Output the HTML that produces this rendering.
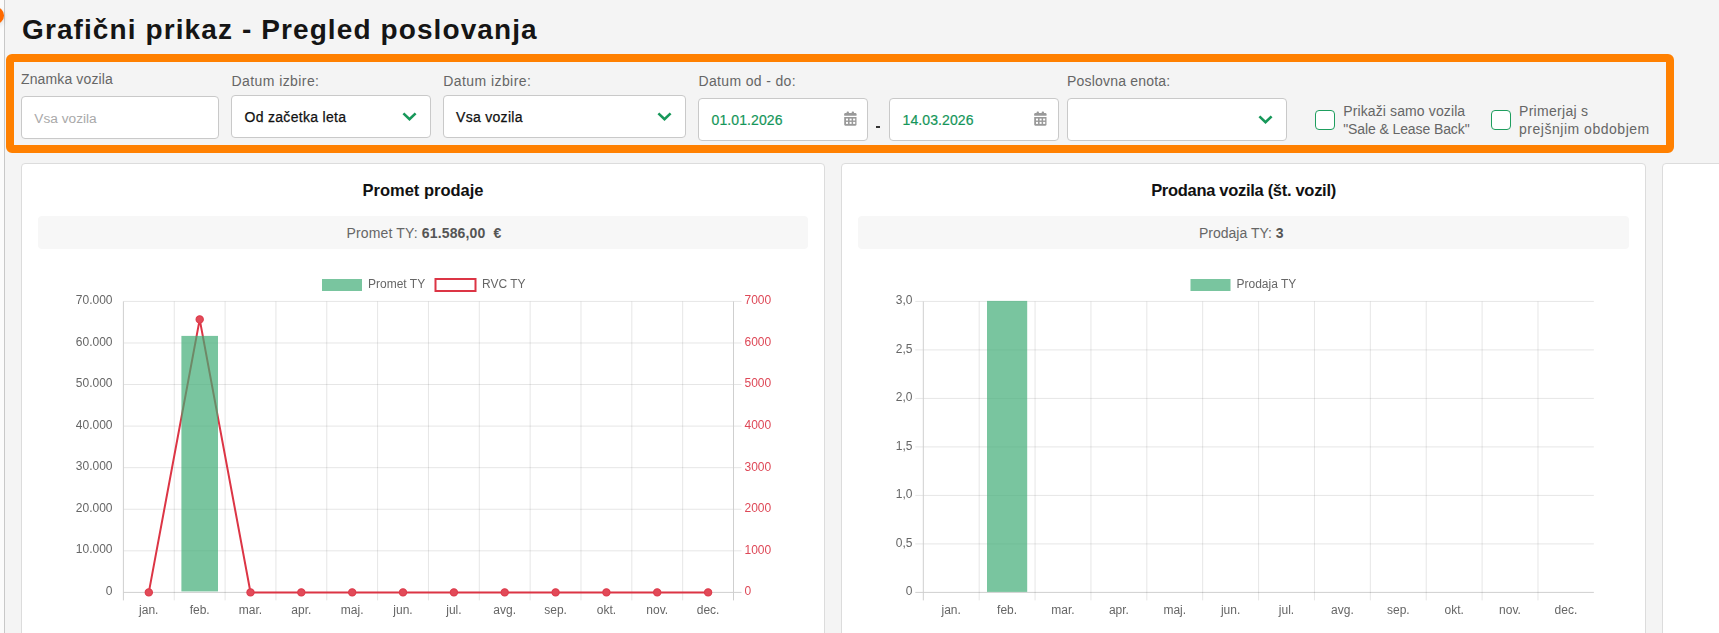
<!DOCTYPE html><html><head><meta charset="utf-8"><title>Grafični prikaz</title><style>
*{margin:0;padding:0;box-sizing:border-box}
html,body{width:1719px;height:633px;overflow:hidden;background:#f4f4f4;font-family:"Liberation Sans", sans-serif}
.t{position:absolute;white-space:pre}
.abs{position:absolute}
.inp{position:absolute;background:#fff;border:1px solid #c9c9c9;border-radius:4px}
.card{position:absolute;background:#fff;border:1px solid #dcdcdc;border-radius:4px}
.sum{position:absolute;background:#f7f7f7;border-radius:4px}
</style></head><body>
<div class="abs" style="left:0;top:0;width:4px;height:633px;background:#fbfbfb"></div>
<div class="abs" style="left:4px;top:0;width:1px;height:633px;background:#c8c8c8"></div>
<div class="abs" style="left:-13.2px;top:7.3px;width:17px;height:16.6px;border-radius:50%;background:#ff6a00;box-shadow:0 2px 5px rgba(0,0,0,0.12)"></div>
<div class="t" style="left:22px;top:15.90px;font-size:28px;line-height:28px;color:#151515;font-weight:bold;letter-spacing:1.1px;">Grafični prikaz - Pregled poslovanja</div>
<div class="abs" style="left:6px;top:54.4px;width:1668px;height:99px;border:8px solid #ff8000;border-radius:6px"></div>
<div class="t" style="left:21px;top:72.15px;font-size:14px;line-height:14px;color:#666;font-weight:normal;letter-spacing:0.13px;">Znamka vozila</div>
<div class="t" style="left:231.5px;top:74.15px;font-size:14px;line-height:14px;color:#666;font-weight:normal;letter-spacing:0.42px;">Datum izbire:</div>
<div class="t" style="left:443.3px;top:74.15px;font-size:14px;line-height:14px;color:#666;font-weight:normal;letter-spacing:0.42px;">Datum izbire:</div>
<div class="t" style="left:698.5px;top:74.15px;font-size:14px;line-height:14px;color:#666;font-weight:normal;letter-spacing:0.35px;">Datum od - do:</div>
<div class="t" style="left:1067px;top:73.95px;font-size:14px;line-height:14px;color:#666;font-weight:normal;letter-spacing:0.2px;">Poslovna enota:</div>
<div class="inp" style="left:21px;top:96px;width:198px;height:43px"></div>
<div class="t" style="left:34.3px;top:111.60px;font-size:13.7px;line-height:13.7px;color:#a9a9a9;font-weight:normal;letter-spacing:0px;">Vsa vozila</div>
<div class="inp" style="left:231px;top:95px;width:200px;height:43px"></div>
<div class="t" style="left:244.5px;top:109.75px;font-size:14px;line-height:14px;color:#111;font-weight:normal;letter-spacing:0.3px;-webkit-text-stroke:0.25px #111">Od začetka leta</div>
<div class="inp" style="left:443px;top:95px;width:243px;height:43px"></div>
<div class="t" style="left:456px;top:109.75px;font-size:14px;line-height:14px;color:#111;font-weight:normal;letter-spacing:0.3px;-webkit-text-stroke:0.25px #111">Vsa vozila</div>
<div class="inp" style="left:698px;top:98px;width:170px;height:43px"></div>
<div class="t" style="left:711.5px;top:112.95px;font-size:14px;line-height:14px;color:#15965a;font-weight:normal;letter-spacing:0.1px;-webkit-text-stroke:0.2px #15965a">01.01.2026</div>
<div class="inp" style="left:889px;top:98px;width:170px;height:43px"></div>
<div class="t" style="left:902.5px;top:112.95px;font-size:14px;line-height:14px;color:#15965a;font-weight:normal;letter-spacing:0.1px;-webkit-text-stroke:0.2px #15965a">14.03.2026</div>
<div class="inp" style="left:1067px;top:98px;width:220px;height:43px"></div>
<div class="abs" style="left:876px;top:126px;width:4px;height:2px;background:#333"></div>
<svg class="abs" style="left:402px;top:112px" width="15" height="10" viewBox="0 0 15 10"><path d="M1.4 1.4 L7.5 7.3 L13.6 1.4" fill="none" stroke="#17985a" stroke-width="2.6"/></svg>
<svg class="abs" style="left:657px;top:112px" width="15" height="10" viewBox="0 0 15 10"><path d="M1.4 1.4 L7.5 7.3 L13.6 1.4" fill="none" stroke="#17985a" stroke-width="2.6"/></svg>
<svg class="abs" style="left:1258px;top:115px" width="15" height="10" viewBox="0 0 15 10"><path d="M1.4 1.4 L7.5 7.3 L13.6 1.4" fill="none" stroke="#17985a" stroke-width="2.6"/></svg>
<svg class="abs" style="left:843.5px;top:111px" width="14" height="16" viewBox="0 0 14 16">
<g fill="#999"><rect x="2.6" y="0.4" width="2.3" height="2.2" rx="0.8"/><rect x="7.7" y="0.4" width="2.3" height="2.2" rx="0.8"/>
<path d="M0.2 3.2 Q0.2 2 1.4 2 L11.3 2 Q12.5 2 12.5 3.2 L12.5 4.8 L0.2 4.8 Z"/>
<path d="M0.2 5.9 L12.5 5.9 L12.5 13.6 Q12.5 14.7 11.4 14.7 L1.3 14.7 Q0.2 14.7 0.2 13.6 Z"/></g>
<g fill="#fff"><rect x="2" y="7.6" width="2" height="1.9"/><rect x="5.6" y="7.6" width="2" height="1.9"/><rect x="9.1" y="7.6" width="2.1" height="1.9"/>
<rect x="2" y="10.9" width="2" height="2"/><rect x="5.6" y="10.9" width="2" height="2"/><rect x="9.1" y="10.9" width="2.1" height="2"/></g></svg>
<svg class="abs" style="left:1034px;top:111px" width="14" height="16" viewBox="0 0 14 16">
<g fill="#999"><rect x="2.6" y="0.4" width="2.3" height="2.2" rx="0.8"/><rect x="7.7" y="0.4" width="2.3" height="2.2" rx="0.8"/>
<path d="M0.2 3.2 Q0.2 2 1.4 2 L11.3 2 Q12.5 2 12.5 3.2 L12.5 4.8 L0.2 4.8 Z"/>
<path d="M0.2 5.9 L12.5 5.9 L12.5 13.6 Q12.5 14.7 11.4 14.7 L1.3 14.7 Q0.2 14.7 0.2 13.6 Z"/></g>
<g fill="#fff"><rect x="2" y="7.6" width="2" height="1.9"/><rect x="5.6" y="7.6" width="2" height="1.9"/><rect x="9.1" y="7.6" width="2.1" height="1.9"/>
<rect x="2" y="10.9" width="2" height="2"/><rect x="5.6" y="10.9" width="2" height="2"/><rect x="9.1" y="10.9" width="2.1" height="2"/></g></svg>
<div class="abs" style="left:1315px;top:110px;width:20px;height:20px;border:1.5px solid #1e9e5e;border-radius:4px;background:#fff"></div>
<div class="t" style="left:1343.2px;top:103.85px;font-size:14px;line-height:14px;color:#666;font-weight:normal;letter-spacing:0.12px;">Prikaži samo vozila</div>
<div class="t" style="left:1343.2px;top:121.65px;font-size:14px;line-height:14px;color:#666;font-weight:normal;letter-spacing:-0.1px;">"Sale &amp; Lease Back"</div>
<div class="abs" style="left:1491px;top:110px;width:20px;height:20px;border:1.5px solid #1e9e5e;border-radius:4px;background:#fff"></div>
<div class="t" style="left:1519px;top:103.85px;font-size:14px;line-height:14px;color:#666;font-weight:normal;letter-spacing:0.3px;">Primerjaj s</div>
<div class="t" style="left:1519px;top:121.65px;font-size:14px;line-height:14px;color:#666;font-weight:normal;letter-spacing:0.52px;">prejšnjim obdobjem</div>
<div class="card" style="left:21px;top:163px;width:804px;height:500px"></div>
<div class="card" style="left:841px;top:163px;width:805px;height:500px"></div>
<div class="card" style="left:1662px;top:163px;width:100px;height:500px"></div>
<div class="t" style="left:21px;top:182.23px;font-size:16.5px;line-height:16.5px;color:#111;font-weight:bold;letter-spacing:0px;width:804px;text-align:center">Promet prodaje</div>
<div class="sum" style="left:38px;top:216px;width:770px;height:32.5px"></div>
<div class="t" style="left:346.5px;top:226.05px;font-size:14px;line-height:14px;color:#666;font-weight:normal;letter-spacing:0.15px;">Promet TY: <b style="color:#555">61.586,00  €</b></div>
<div class="t" style="left:841px;top:182.23px;font-size:16.5px;line-height:16.5px;color:#111;font-weight:bold;letter-spacing:-0.3px;width:805px;text-align:center">Prodana vozila (št. vozil)</div>
<div class="sum" style="left:858px;top:216px;width:771px;height:32.5px"></div>
<div class="t" style="left:1199px;top:226.05px;font-size:14px;line-height:14px;color:#666;font-weight:normal;letter-spacing:0px;">Prodaja TY: <b style="color:#555">3</b></div>
<svg class="abs" style="left:0;top:0;will-change:transform" width="1719" height="633" viewBox="0 0 1719 633" font-family="Liberation Sans, sans-serif"><line x1="123.4" y1="592.4" x2="741.5" y2="592.4" stroke="#cfcfcf" stroke-width="1"/><text x="112.5" y="595.0" text-anchor="end" fill="#666" font-size="12">0</text><text x="744.5" y="595.3" fill="#de4857" font-size="12">0</text><line x1="123.4" y1="550.8285714285714" x2="741.5" y2="550.8285714285714" stroke="rgba(0,0,0,0.1)" stroke-width="1"/><text x="112.5" y="553.4" text-anchor="end" fill="#666" font-size="12">10.000</text><text x="744.5" y="553.7" fill="#de4857" font-size="12">1000</text><line x1="123.4" y1="509.25714285714287" x2="741.5" y2="509.25714285714287" stroke="rgba(0,0,0,0.1)" stroke-width="1"/><text x="112.5" y="511.9" text-anchor="end" fill="#666" font-size="12">20.000</text><text x="744.5" y="512.2" fill="#de4857" font-size="12">2000</text><line x1="123.4" y1="467.68571428571425" x2="741.5" y2="467.68571428571425" stroke="rgba(0,0,0,0.1)" stroke-width="1"/><text x="112.5" y="470.3" text-anchor="end" fill="#666" font-size="12">30.000</text><text x="744.5" y="470.6" fill="#de4857" font-size="12">3000</text><line x1="123.4" y1="426.1142857142857" x2="741.5" y2="426.1142857142857" stroke="rgba(0,0,0,0.1)" stroke-width="1"/><text x="112.5" y="428.7" text-anchor="end" fill="#666" font-size="12">40.000</text><text x="744.5" y="429.0" fill="#de4857" font-size="12">4000</text><line x1="123.4" y1="384.5428571428571" x2="741.5" y2="384.5428571428571" stroke="rgba(0,0,0,0.1)" stroke-width="1"/><text x="112.5" y="387.1" text-anchor="end" fill="#666" font-size="12">50.000</text><text x="744.5" y="387.4" fill="#de4857" font-size="12">5000</text><line x1="123.4" y1="342.97142857142853" x2="741.5" y2="342.97142857142853" stroke="rgba(0,0,0,0.1)" stroke-width="1"/><text x="112.5" y="345.6" text-anchor="end" fill="#666" font-size="12">60.000</text><text x="744.5" y="345.9" fill="#de4857" font-size="12">6000</text><line x1="123.4" y1="301.4" x2="741.5" y2="301.4" stroke="rgba(0,0,0,0.1)" stroke-width="1"/><text x="112.5" y="304.0" text-anchor="end" fill="#666" font-size="12">70.000</text><text x="744.5" y="304.3" fill="#de4857" font-size="12">7000</text><line x1="123.4" y1="301.4" x2="123.4" y2="600.4" stroke="#cfcfcf" stroke-width="1"/><line x1="174.24166666666667" y1="301.4" x2="174.24166666666667" y2="600.4" stroke="rgba(0,0,0,0.1)" stroke-width="1"/><line x1="225.08333333333334" y1="301.4" x2="225.08333333333334" y2="600.4" stroke="rgba(0,0,0,0.1)" stroke-width="1"/><line x1="275.925" y1="301.4" x2="275.925" y2="600.4" stroke="rgba(0,0,0,0.1)" stroke-width="1"/><line x1="326.76666666666665" y1="301.4" x2="326.76666666666665" y2="600.4" stroke="rgba(0,0,0,0.1)" stroke-width="1"/><line x1="377.60833333333335" y1="301.4" x2="377.60833333333335" y2="600.4" stroke="rgba(0,0,0,0.1)" stroke-width="1"/><line x1="428.45000000000005" y1="301.4" x2="428.45000000000005" y2="600.4" stroke="rgba(0,0,0,0.1)" stroke-width="1"/><line x1="479.29166666666663" y1="301.4" x2="479.29166666666663" y2="600.4" stroke="rgba(0,0,0,0.1)" stroke-width="1"/><line x1="530.1333333333333" y1="301.4" x2="530.1333333333333" y2="600.4" stroke="rgba(0,0,0,0.1)" stroke-width="1"/><line x1="580.975" y1="301.4" x2="580.975" y2="600.4" stroke="rgba(0,0,0,0.1)" stroke-width="1"/><line x1="631.8166666666667" y1="301.4" x2="631.8166666666667" y2="600.4" stroke="rgba(0,0,0,0.1)" stroke-width="1"/><line x1="682.6583333333333" y1="301.4" x2="682.6583333333333" y2="600.4" stroke="rgba(0,0,0,0.1)" stroke-width="1"/><line x1="733.5" y1="301.4" x2="733.5" y2="600.4" stroke="#cfcfcf" stroke-width="1"/><text x="148.8" y="613.8" text-anchor="middle" fill="#666" font-size="12">jan.</text><text x="199.7" y="613.8" text-anchor="middle" fill="#666" font-size="12">feb.</text><text x="250.5" y="613.8" text-anchor="middle" fill="#666" font-size="12">mar.</text><text x="301.3" y="613.8" text-anchor="middle" fill="#666" font-size="12">apr.</text><text x="352.2" y="613.8" text-anchor="middle" fill="#666" font-size="12">maj.</text><text x="403.0" y="613.8" text-anchor="middle" fill="#666" font-size="12">jun.</text><text x="453.9" y="613.8" text-anchor="middle" fill="#666" font-size="12">jul.</text><text x="504.7" y="613.8" text-anchor="middle" fill="#666" font-size="12">avg.</text><text x="555.6" y="613.8" text-anchor="middle" fill="#666" font-size="12">sep.</text><text x="606.4" y="613.8" text-anchor="middle" fill="#666" font-size="12">okt.</text><text x="657.2" y="613.8" text-anchor="middle" fill="#666" font-size="12">nov.</text><text x="708.1" y="613.8" text-anchor="middle" fill="#666" font-size="12">dec.</text><polyline points="148.8,592.4 199.7,319.4 250.5,592.4 301.3,592.4 352.2,592.4 403.0,592.4 453.9,592.4 504.7,592.4 555.6,592.4 606.4,592.4 657.2,592.4 708.1,592.4" fill="none" stroke="#dc3545" stroke-width="2" stroke-linejoin="miter"/><circle cx="148.8" cy="592.4" r="3.6" fill="#e24a58" stroke="#de3e4e" stroke-width="1.2"/><circle cx="199.7" cy="319.4" r="3.6" fill="#e24a58" stroke="#de3e4e" stroke-width="1.2"/><circle cx="250.5" cy="592.4" r="3.6" fill="#e24a58" stroke="#de3e4e" stroke-width="1.2"/><circle cx="301.3" cy="592.4" r="3.6" fill="#e24a58" stroke="#de3e4e" stroke-width="1.2"/><circle cx="352.2" cy="592.4" r="3.6" fill="#e24a58" stroke="#de3e4e" stroke-width="1.2"/><circle cx="403.0" cy="592.4" r="3.6" fill="#e24a58" stroke="#de3e4e" stroke-width="1.2"/><circle cx="453.9" cy="592.4" r="3.6" fill="#e24a58" stroke="#de3e4e" stroke-width="1.2"/><circle cx="504.7" cy="592.4" r="3.6" fill="#e24a58" stroke="#de3e4e" stroke-width="1.2"/><circle cx="555.6" cy="592.4" r="3.6" fill="#e24a58" stroke="#de3e4e" stroke-width="1.2"/><circle cx="606.4" cy="592.4" r="3.6" fill="#e24a58" stroke="#de3e4e" stroke-width="1.2"/><circle cx="657.2" cy="592.4" r="3.6" fill="#e24a58" stroke="#de3e4e" stroke-width="1.2"/><circle cx="708.1" cy="592.4" r="3.6" fill="#e24a58" stroke="#de3e4e" stroke-width="1.2"/><rect x="181.4" y="335.9" width="36.6" height="255.5" fill="rgba(64,172,118,0.7)"/><rect x="322" y="279" width="40" height="12" fill="rgba(64,172,118,0.7)"/><text x="368" y="288" fill="#666" font-size="12">Promet TY</text><rect x="435.5" y="279" width="40" height="12" fill="#fff" stroke="#dc3545" stroke-width="2"/><text x="482" y="288" fill="#666" font-size="12">RVC TY</text><line x1="915.3" y1="592.4" x2="1593.8600000000001" y2="592.4" stroke="#cfcfcf" stroke-width="1"/><text x="912.5" y="595.0" text-anchor="end" fill="#666" font-size="12">0</text><line x1="915.3" y1="543.9" x2="1593.8600000000001" y2="543.9" stroke="rgba(0,0,0,0.1)" stroke-width="1"/><text x="912.5" y="546.5" text-anchor="end" fill="#666" font-size="12">0,5</text><line x1="915.3" y1="495.4" x2="1593.8600000000001" y2="495.4" stroke="rgba(0,0,0,0.1)" stroke-width="1"/><text x="912.5" y="498.0" text-anchor="end" fill="#666" font-size="12">1,0</text><line x1="915.3" y1="446.9" x2="1593.8600000000001" y2="446.9" stroke="rgba(0,0,0,0.1)" stroke-width="1"/><text x="912.5" y="449.5" text-anchor="end" fill="#666" font-size="12">1,5</text><line x1="915.3" y1="398.4" x2="1593.8600000000001" y2="398.4" stroke="rgba(0,0,0,0.1)" stroke-width="1"/><text x="912.5" y="401.0" text-anchor="end" fill="#666" font-size="12">2,0</text><line x1="915.3" y1="349.9" x2="1593.8600000000001" y2="349.9" stroke="rgba(0,0,0,0.1)" stroke-width="1"/><text x="912.5" y="352.5" text-anchor="end" fill="#666" font-size="12">2,5</text><line x1="915.3" y1="301.4" x2="1593.8600000000001" y2="301.4" stroke="rgba(0,0,0,0.1)" stroke-width="1"/><text x="912.5" y="304.0" text-anchor="end" fill="#666" font-size="12">3,0</text><line x1="923.3" y1="301.4" x2="923.3" y2="600.4" stroke="#cfcfcf" stroke-width="1"/><line x1="979.18" y1="301.4" x2="979.18" y2="600.4" stroke="rgba(0,0,0,0.1)" stroke-width="1"/><line x1="1035.06" y1="301.4" x2="1035.06" y2="600.4" stroke="rgba(0,0,0,0.1)" stroke-width="1"/><line x1="1090.94" y1="301.4" x2="1090.94" y2="600.4" stroke="rgba(0,0,0,0.1)" stroke-width="1"/><line x1="1146.82" y1="301.4" x2="1146.82" y2="600.4" stroke="rgba(0,0,0,0.1)" stroke-width="1"/><line x1="1202.7" y1="301.4" x2="1202.7" y2="600.4" stroke="rgba(0,0,0,0.1)" stroke-width="1"/><line x1="1258.58" y1="301.4" x2="1258.58" y2="600.4" stroke="rgba(0,0,0,0.1)" stroke-width="1"/><line x1="1314.46" y1="301.4" x2="1314.46" y2="600.4" stroke="rgba(0,0,0,0.1)" stroke-width="1"/><line x1="1370.34" y1="301.4" x2="1370.34" y2="600.4" stroke="rgba(0,0,0,0.1)" stroke-width="1"/><line x1="1426.22" y1="301.4" x2="1426.22" y2="600.4" stroke="rgba(0,0,0,0.1)" stroke-width="1"/><line x1="1482.1" y1="301.4" x2="1482.1" y2="600.4" stroke="rgba(0,0,0,0.1)" stroke-width="1"/><line x1="1537.98" y1="301.4" x2="1537.98" y2="600.4" stroke="rgba(0,0,0,0.1)" stroke-width="1"/><text x="951.2" y="613.8" text-anchor="middle" fill="#666" font-size="12">jan.</text><text x="1007.1" y="613.8" text-anchor="middle" fill="#666" font-size="12">feb.</text><text x="1063.0" y="613.8" text-anchor="middle" fill="#666" font-size="12">mar.</text><text x="1118.9" y="613.8" text-anchor="middle" fill="#666" font-size="12">apr.</text><text x="1174.8" y="613.8" text-anchor="middle" fill="#666" font-size="12">maj.</text><text x="1230.6" y="613.8" text-anchor="middle" fill="#666" font-size="12">jun.</text><text x="1286.5" y="613.8" text-anchor="middle" fill="#666" font-size="12">jul.</text><text x="1342.4" y="613.8" text-anchor="middle" fill="#666" font-size="12">avg.</text><text x="1398.3" y="613.8" text-anchor="middle" fill="#666" font-size="12">sep.</text><text x="1454.2" y="613.8" text-anchor="middle" fill="#666" font-size="12">okt.</text><text x="1510.0" y="613.8" text-anchor="middle" fill="#666" font-size="12">nov.</text><text x="1565.9" y="613.8" text-anchor="middle" fill="#666" font-size="12">dec.</text><rect x="987.0" y="300.9" width="40.2" height="291.0" fill="rgba(64,172,118,0.7)"/><rect x="1190.5" y="279" width="40" height="12" fill="rgba(64,172,118,0.7)"/><text x="1236.5" y="288" fill="#666" font-size="12">Prodaja TY</text></svg>
</body></html>
